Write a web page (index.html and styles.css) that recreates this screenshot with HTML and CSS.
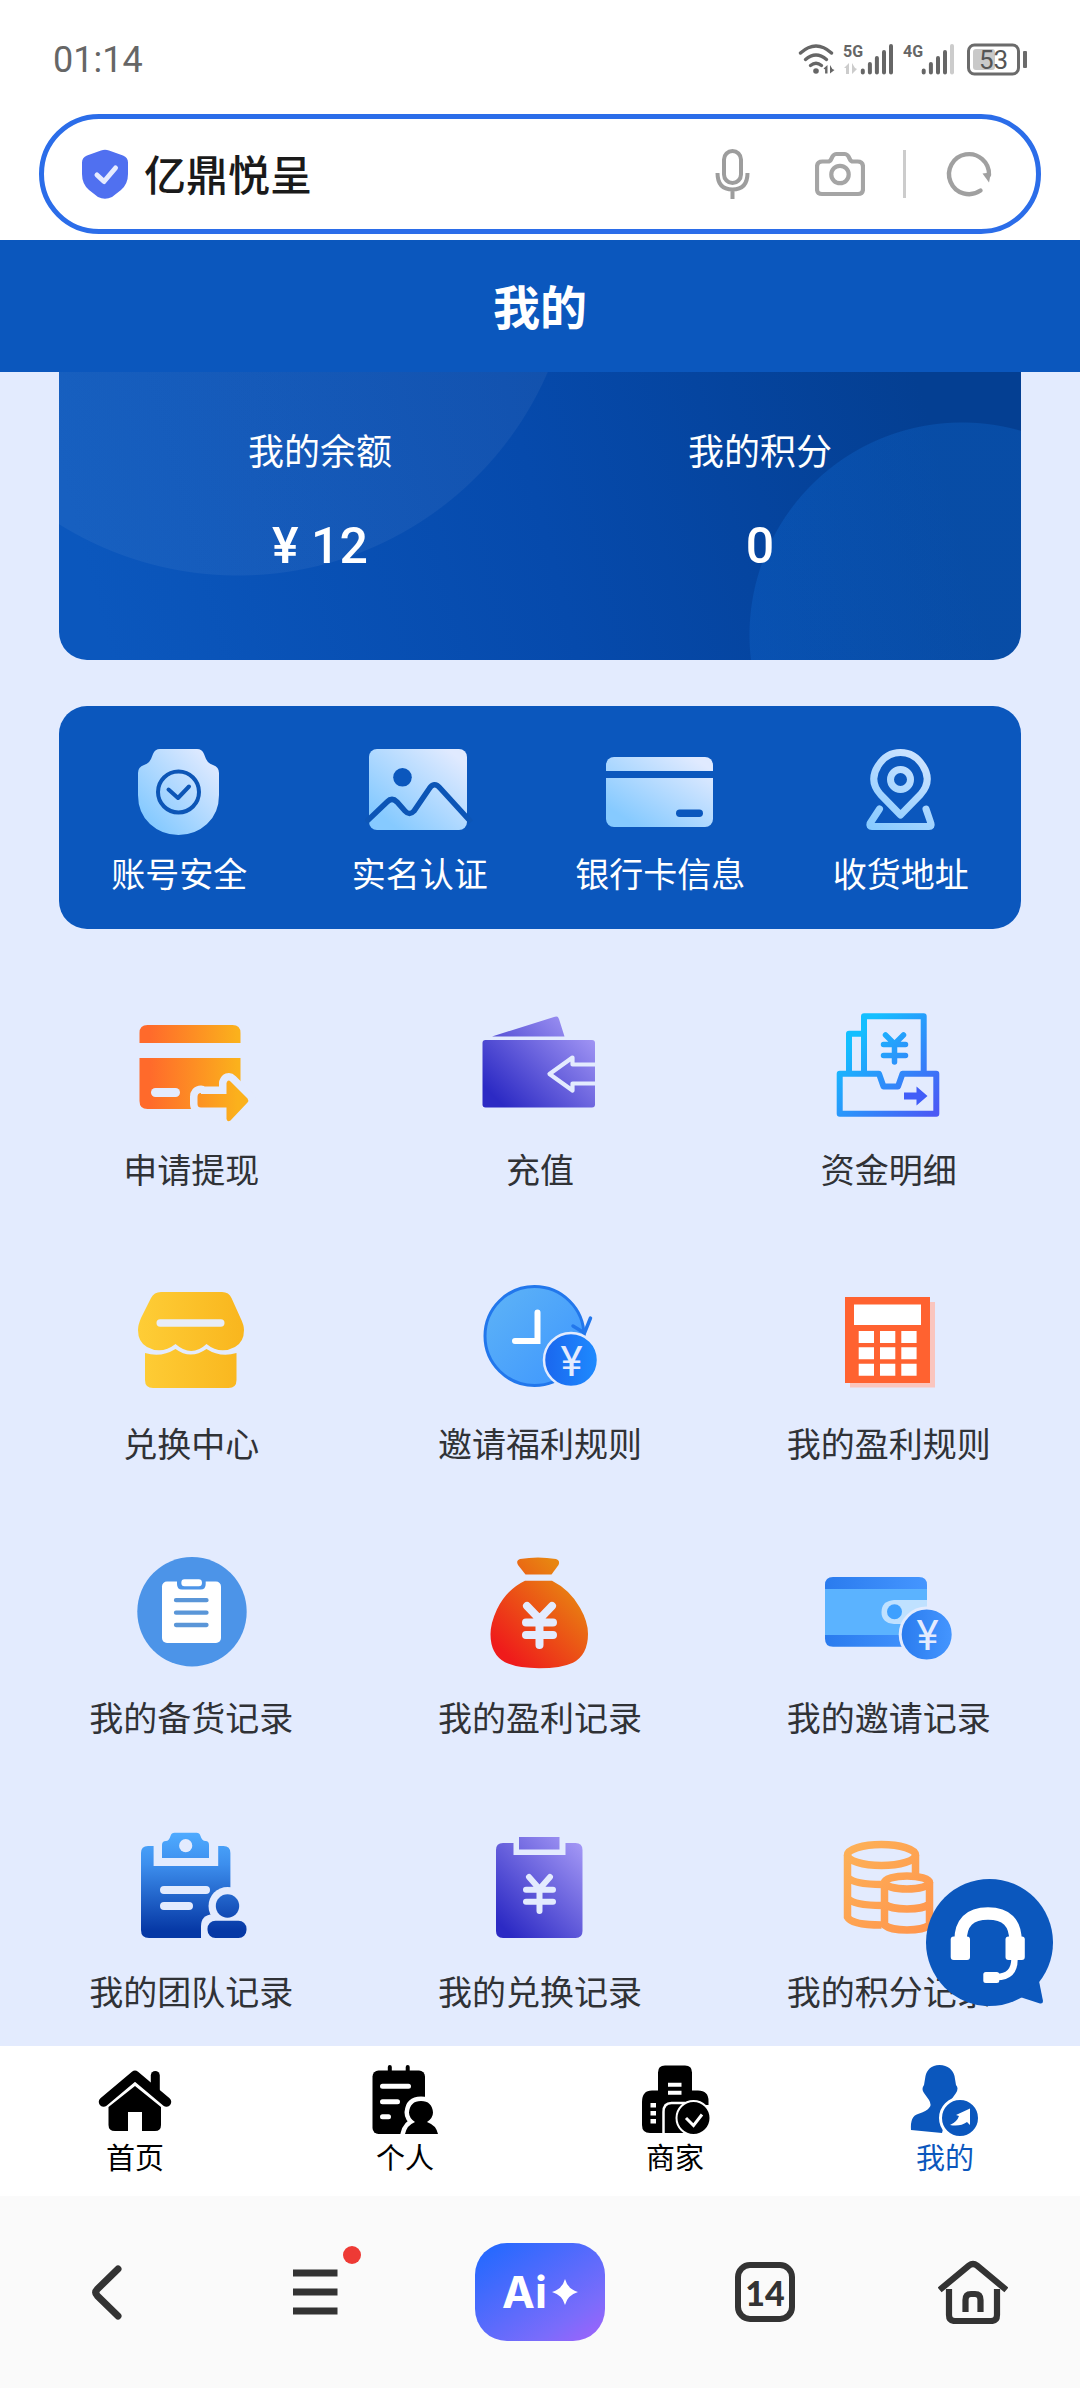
FILE: index.html
```html
<!DOCTYPE html>
<html lang="zh-CN">
<head>
    <meta charset="UTF-8">
    <meta name="viewport" content="width=device-width, initial-scale=1.0">
    <title>我的</title>
    <link rel="stylesheet" href="styles.css">
</head>
<body>

    <!-- Shared gradients -->
    <svg class="defs" width="0" height="0" aria-hidden="true">
        <defs>
            <linearGradient id="ice" x1="0" y1="1" x2="1" y2="0">
                <stop offset="0.15" stop-color="#86caff"/><stop offset="0.9" stop-color="#e0eaff"/>
            </linearGradient>
            <linearGradient id="iceLine" gradientUnits="userSpaceOnUse" x1="30" y1="85" x2="80" y2="0">
                <stop offset="0" stop-color="#86caff"/><stop offset="1" stop-color="#d4e6ff"/>
            </linearGradient>
            <linearGradient id="orange" gradientUnits="userSpaceOnUse" x1="8" y1="0" x2="112" y2="0">
                <stop offset="0.1" stop-color="#ff6a2b"/><stop offset="0.95" stop-color="#fbb11c"/>
            </linearGradient>
            <linearGradient id="purple" gradientUnits="userSpaceOnUse" x1="20" y1="105" x2="105" y2="20">
                <stop offset="0.05" stop-color="#2c2ac4"/><stop offset="1" stop-color="#a397f5"/>
            </linearGradient>
            <linearGradient id="cyan" gradientUnits="userSpaceOnUse" x1="20" y1="20" x2="108" y2="105">
                <stop offset="0.1" stop-color="#14bfff"/><stop offset="1" stop-color="#4b58f5"/>
            </linearGradient>
            <linearGradient id="yellow" gradientUnits="userSpaceOnUse" x1="8" y1="0" x2="112" y2="0">
                <stop offset="0" stop-color="#fecd36"/><stop offset="1" stop-color="#f9b61e"/>
            </linearGradient>
            <linearGradient id="sky" x1="0" y1="0" x2="1" y2="1">
                <stop offset="0" stop-color="#5fb4f6"/><stop offset="1" stop-color="#3c95ff"/>
            </linearGradient>
            <linearGradient id="coin" x1="0" y1="0" x2="1" y2="0">
                <stop offset="0" stop-color="#1a66ee"/><stop offset="1" stop-color="#1e8bff"/>
            </linearGradient>
            <linearGradient id="fire" gradientUnits="userSpaceOnUse" x1="25" y1="100" x2="95" y2="30">
                <stop offset="0" stop-color="#ef1b1b"/><stop offset="1" stop-color="#e88611"/>
            </linearGradient>
            <linearGradient id="navy" gradientUnits="userSpaceOnUse" x1="0" y1="5" x2="0" y2="108">
                <stop offset="0" stop-color="#4fabff"/><stop offset="0.3" stop-color="#3d8fee"/><stop offset="0.95" stop-color="#0638a5"/>
            </linearGradient>
            <linearGradient id="band" x1="0" y1="0" x2="1" y2="0">
                <stop offset="0" stop-color="#2a7bee"/><stop offset="1" stop-color="#4596ff"/>
            </linearGradient>
            <linearGradient id="peach" gradientUnits="userSpaceOnUse" x1="20" y1="20" x2="100" y2="100">
                <stop offset="0" stop-color="#fdb057"/><stop offset="1" stop-color="#ff954d"/>
            </linearGradient>
        </defs>
    </svg>

    <div class="status-bar">
        <span class="clock">01:14</span>
        <svg class="status-icons" width="232" height="40" viewBox="0 0 232 40" aria-label="53%">
            <g fill="none" stroke="#666" stroke-width="3.4" stroke-linecap="round">
                <path d="M3.500 13q15.500-14 31 0"/>
                <path d="M8.500 19.500q10.500-9 21 0"/>
                <path d="M13.500 25.500q5.500-4.500 11 0"/>
            </g>
            <circle cx="19" cy="31" r="2.800" fill="#666"/>
            <path d="M26.500 28.500l4-3.500v8.500h-2.400v-4zM33 25v8.500l4.500-3.500-2.100-1z" fill="#666"/>
            <text x="46" y="17" class="net">5G</text>
            <path d="M47 28l5-5v11h-3v-6zM55 23v11l5-5-2-1z" fill="#ccc"/>
            <path d="M65.800 30.500v2M72.900 24v8.500M79.900 18v14.500M87 12v20.500M94 6v26.500" class="bars"/>
            <text x="106" y="17" class="net">4G</text>
            <path d="M126.700 30.500v2M133.900 24v8.500M141 18v14.500M148 12v20.500" class="bars"/>
            <path d="M155 6v26.500" class="bars faint"/>
            <rect x="171.500" y="5" width="50" height="29" rx="6" fill="none" stroke="#6b6b6b" stroke-width="3"/>
            <rect x="176" y="9" width="22" height="21" rx="3" fill="#c9c9c9"/>
            <rect x="226" y="11" width="4" height="17" rx="1" fill="#6b6b6b"/>
            <text x="196.500" y="29" class="charge">53</text>
        </svg>
    </div>

    <form class="search-bar">
        <svg width="46" height="50" viewBox="0 0 46 50" aria-hidden="true">
            <path d="M19 1.500q4-1.500 8 0l14 5q5 2 5 7V25q0 10-7 16l-9 7q-7 3.500-14 0l-9-7Q0 35 0 25V13.500q0-5 5-7z" fill="#5070f0"/>
            <path d="M15 26l7 6.500L33.500 19" fill="none" stroke="#e6ebff" stroke-width="5" stroke-linecap="round" stroke-linejoin="round"/>
        </svg>
        <input class="search-input" type="text" value="亿鼎悦呈" aria-label="搜索">
        <button class="icon-button" type="button" aria-label="语音">
            <svg width="50" height="50" viewBox="0 0 50 50" fill="none" stroke="#9d9d9d" stroke-width="4">
                <rect x="17" y="2" width="17" height="32" rx="8.500"/>
                <path d="M10.500 24q0 16.500 15 16.500T40.500 24M25.500 40v10"/>
            </svg>
        </button>
        <button class="icon-button camera" type="button" aria-label="拍照">
            <svg width="50" height="50" viewBox="0 0 50 50" fill="none" stroke="#a5a5a5" stroke-width="4.200" stroke-linejoin="round">
                <path d="M7.500 12.500h5.500q2 0 3-2l1.500-3Q19 5 21.500 5h8q2.500 0 4 2.500l1.500 3q1 2 3 2h4.500q5.500 0 5.500 5.500v22q0 5-5 5H7q-5 0-5-5V18q0-5.500 5.500-5.500z"/>
                <circle cx="25" cy="25.500" r="8.700"/>
            </svg>
        </button>
        <span class="divider"></span>
        <button class="icon-button" type="button" aria-label="刷新">
            <svg width="50" height="50" viewBox="0 0 50 50">
                <path d="M36.500 41.500A20 20 0 1 1 45 26" fill="none" stroke="#a0a0a0" stroke-width="4.400" stroke-linecap="round"/>
                <path d="M38.500 24.500l8.500-1-2 10z" fill="#a0a0a0"/>
            </svg>
        </button>
    </form>

    <header class="page-header">
        <h1>我的</h1>
    </header>

    <main>
        <section class="balance-card">
            <div class="balance">
                <span class="balance-label">我的余额</span>
                <strong>¥ 12</strong>
            </div>
            <div class="balance">
                <span class="balance-label">我的积分</span>
                <strong>0</strong>
            </div>
        </section>

        <nav class="quick-panel">
            <a href="#">
                <svg width="110" height="90" viewBox="0 0 110 90">
                    <path d="M36 1h37q5 0 7 5l2 5q2 4.500 7 6 6 2 6 8V47q0 18-12 29-12 11-28.500 11T26 76Q14 65 14 47V25q0-6 6-8 5-1.500 7-6l2-5q2-5 7-5z" fill="url(#ice)"/>
                    <circle cx="54.500" cy="44" r="20.500" fill="none" stroke="#0c55b6" stroke-width="4"/>
                    <path d="M44.500 41.500l9.500 8.500L65 38.500" fill="none" stroke="#0c55b6" stroke-width="4" stroke-linecap="round" stroke-linejoin="round"/>
                </svg>
                <span>账号安全</span>
            </a>
            <a href="#">
                <svg width="110" height="90" viewBox="0 0 110 90">
                    <rect x="4" y="1" width="98" height="81" rx="8" fill="url(#ice)"/>
                    <circle cx="37.500" cy="29.300" r="9.300" fill="#0b57bd"/>
                    <path d="M1 74l21-20q5-5 10 0l8 9q4.500 5 9 0l15-22q5-8 11-1l31 34" fill="none" stroke="#0c55b6" stroke-width="5.500"/>
                </svg>
                <span>实名认证</span>
            </a>
            <a href="#">
                <svg width="110" height="90" viewBox="0 0 110 90">
                    <rect x="1" y="9" width="107" height="70" rx="8" fill="url(#ice)"/>
                    <path d="M0 26.500h110" stroke="#0b57bd" stroke-width="7"/>
                    <rect x="71" y="61.500" width="27" height="7.500" rx="3.700" fill="#0b57bd"/>
                </svg>
                <span>银行卡信息</span>
            </a>
            <a href="#">
                <svg width="110" height="90" viewBox="0 0 110 90" fill="none" stroke="url(#iceLine)" stroke-width="7" stroke-linecap="round" stroke-linejoin="round">
                    <path d="M54.500 67L34.500 46.500C27 38 25.500 28 32 18c11-18 34-18 45 0 6.500 10 5 20-2.500 28.500z"/>
                    <circle cx="54.500" cy="31.500" r="10"/>
                    <path d="M33.500 61L24 75.500q-1 3 2 3h57q3 0 2-3L80 61"/>
                </svg>
                <span>收货地址</span>
            </a>
        </nav>

        <nav class="menu-grid">
            <a href="#">
                <svg width="130" height="120" viewBox="-5 0 130 120">
                    <path d="M8.500 37v-10q0-8 8-8h85q8 0 8 8v10zM8.500 52h101v51h-93q-8 0-8-8z" fill="url(#orange)"/>
                    <rect x="20" y="82" width="29" height="9" rx="4.500" fill="#e3ebfe"/>
                    <path d="M70 88h25.500V77q1.500-4 4-1.500l17 17q1.500 2 0 4l-17 18q-3 2-4-1.500v-11.500H70q-3.500 0-3.500-3.500v-7q0-4 3.500-4z" fill="#e3ebfe" stroke="#e3ebfe" stroke-width="15" stroke-linejoin="round"/>
                    <path d="M70 88h25.500V77q1.500-4 4-1.500l17 17q1.500 2 0 4l-17 18q-3 2-4-1.500v-11.500H70q-3.500 0-3.500-3.500v-7q0-4 3.500-4z" fill="url(#orange)"/>
                </svg>
                <span>申请提现</span>
            </a>
            <a href="#">
                <svg width="130" height="120" viewBox="-5 0 130 120">
                    <path d="M12 30.500L74 11q4-1.500 5 2l5.500 17.500z" fill="url(#purple)"/>
                    <rect x="2.500" y="34" width="112.500" height="67.500" rx="3" fill="url(#purple)"/>
                    <path d="M116 58.500H92.500v-7L69.500 68l23 16.500v-7H116" fill="none" stroke="#e3ebfe" stroke-width="4.200" stroke-linejoin="round"/>
                </svg>
                <span>充值</span>
            </a>
            <a href="#">
                <svg width="130" height="120" viewBox="-5 0 130 120">
                    <g fill="none" stroke="url(#cyan)" stroke-width="6" stroke-linejoin="round">
                        <path d="M10.700 67.700H50L54.500 80.500H69l4.500-12.800h33.800v40H10.700z"/>
                        <path d="M35 67V10.300h59.700V67M20 67V27.700h15"/>
                        <path d="M56.500 29l9 9 9-9M54.500 38.500h22M54.500 49.500h22M65.500 38v18" stroke-linecap="round" stroke-width="5.500"/>
                    </g>
                    <path d="M75 86.500h12.500v-6L98.500 90l-11 9.500v-6H75z" fill="#415df8"/>
                </svg>
                <span>资金明细</span>
            </a>
            <a href="#">
                <svg width="130" height="120" viewBox="-5 0 130 120">
                    <path d="M30 12h61q7 0 9.500 6l9 20Q113 45 113 50q0 12-9 17-15 8-28.500-3-15 14-31 0-14 11-28.500 3Q7 62 7 50q0-5 3-12l10-20q3-6 10-6z" fill="url(#yellow)"/>
                    <path d="M14 73q16 5 30.500-4 15 11 31 0 14 9 30 4v27q0 8-8 8H22q-8 0-8-8z" fill="url(#yellow)"/>
                    <rect x="25.500" y="39.300" width="68" height="7.500" rx="3.700" fill="#e8edf8"/>
                </svg>
                <span>兑换中心</span>
            </a>
            <a href="#">
                <svg width="130" height="120" viewBox="-5 0 130 120">
                    <circle cx="54.500" cy="56" r="49.500" fill="url(#sky)" stroke="#2277ec" stroke-width="3"/>
                    <path d="M57.500 32.500V61H35" fill="none" stroke="#fff" stroke-width="6" stroke-linecap="round"/>
                    <path d="M93 46l11.500 7 6-15" fill="none" stroke="#2277ec" stroke-width="3.500" stroke-linecap="round"/>
                    <circle cx="91" cy="80" r="27" fill="url(#coin)" stroke="#e3ebfe" stroke-width="2.500"/>
                    <text x="91.500" y="96" class="yen">¥</text>
                </svg>
                <span>邀请福利规则</span>
            </a>
            <a href="#">
                <svg width="130" height="120" viewBox="-5 0 130 120">
                    <rect x="21" y="22" width="85" height="85.500" fill="#fac5be"/>
                    <rect x="16" y="17" width="85" height="86" fill="#ff6230"/>
                    <g fill="#fff">
                        <rect x="25" y="24.500" width="67" height="20.500"/>
                        <path d="M29.700 51h15.300v12H29.700zM51 51h15.300v12H51zM72.300 51h15.300v12H72.300zM29.700 67.300h15.300v12H29.700zM51 67.300h15.300v12H51zM72.300 67.300h15.300v12H72.300zM29.700 83.700h15.300v12H29.700zM51 83.700h15.300v12H51zM72.300 83.700h15.300v12H72.300z"/>
                    </g>
                </svg>
                <span>我的盈利规则</span>
            </a>
            <a href="#">
                <svg width="130" height="120" viewBox="-5 0 130 120">
                    <circle cx="61" cy="57.700" r="54.700" fill="#4c94e8"/>
                    <rect x="31" y="27.500" width="59" height="61.500" rx="5" fill="#fff"/>
                    <path d="M46 26h28.700v4q0 5.500-5 5.500H51q-5 0-5-5.500z" fill="#4c94e8"/>
                    <rect x="50.400" y="25.300" width="20.500" height="7" rx="3" fill="#fff"/>
                    <path d="M45 46.200h30.500M45 58.700h30.500M45 71h30.500" stroke="#5a96d8" stroke-width="4.300" stroke-linecap="round"/>
                </svg>
                <span>我的备货记录</span>
            </a>
            <a href="#">
                <svg width="130" height="120" viewBox="-5 0 130 120">
                    <path d="M40 5q18-3 36 0 4.500 1.500 2.500 6l-7 9.500h-26L38 11q-2.500-4.500 2-6z" fill="url(#fire)"/>
                    <path d="M45 26.700h27q18 9 28 27 8 14 8 26 0 21-15 29-12 5.500-34 5.500t-34-6q-14.500-8-14.500-28 0-11 6.500-25 10-20 28-28.500z" fill="url(#fire)"/>
                    <path d="M47 52l12.500 13L72 52M46 68.500h27M46 81h27M59.500 66v25" fill="none" stroke="#e3ebfe" stroke-width="8" stroke-linecap="round"/>
                </svg>
                <span>我的盈利记录</span>
            </a>
            <a href="#">
                <svg width="130" height="120" viewBox="-5 0 130 120">
                    <path d="M-4 36v-5q0-8 8-8h86q8 0 8 8v5zM-4 80h102v12.700H4q-8 0-8-8z" fill="url(#band)"/>
                    <rect x="-4" y="35" width="102" height="46" fill="#5bb3ff"/>
                    <path d="M98 46H65q-12.500 1-12.500 12T65 70h33z" fill="#bfe1ff"/>
                    <circle cx="65.500" cy="57.700" r="7.500" fill="#3ea0ff"/>
                    <circle cx="97.700" cy="80.500" r="26.500" fill="url(#band)" stroke="#e3ebfe" stroke-width="3"/>
                    <text x="98.500" y="96" class="yen">¥</text>
                </svg>
                <span>我的邀请记录</span>
            </a>
            <a href="#">
                <svg width="130" height="120" viewBox="-5 0 130 120">
                    <path d="M10 25q0-7 7-7h5.600v20h64.600V18h5.200q7 0 7 7v85H18q-8 0-8-8z" fill="url(#navy)"/>
                    <path d="M31 17q0-4 4-4 3 0 4.500-5 1-3.300 4-3.300h22q3 0 4 3.300 1.500 5 5 5t3.500 4v13H31z" fill="url(#navy)"/>
                    <circle cx="54.700" cy="17.700" r="6.600" fill="#e3ebfe"/>
                    <path d="M33 62h42M33 78h25" stroke="#e3ebfe" stroke-width="8" stroke-linecap="round"/>
                    <g fill="#e3ebfe"><circle cx="96.500" cy="78" r="19"/><path d="M70 112V98q0-11 12-12h30q10 2 11 12v14z"/></g>
                    <circle cx="96.500" cy="78" r="11.700" fill="url(#navy)"/>
                    <rect x="76.500" y="92.700" width="39" height="17.300" rx="8" fill="url(#navy)"/>
                </svg>
                <span>我的团队记录</span>
            </a>
            <a href="#">
                <svg width="130" height="120" viewBox="-5 0 130 120">
                    <path d="M23 15h10.500v12h52V15h10q7 0 7 7v81q0 7-7 7H23q-7 0-7-7V22q0-7 7-7z" fill="url(#purple)"/>
                    <rect x="39" y="9" width="40.500" height="12.500" fill="url(#purple)"/>
                    <path d="M49 49l10.500 12L70 49M46 61.700h27M46 73.700h27M59.500 62v21" fill="none" stroke="#e3ebfe" stroke-width="6" stroke-linecap="round"/>
                </svg>
                <span>我的兑换记录</span>
            </a>
            <a href="#">
                <svg width="130" height="120" viewBox="-5 0 130 120" fill="none" stroke="url(#peach)" stroke-width="7.500">
                    <ellipse cx="52.500" cy="27" rx="34" ry="10.500"/>
                    <path d="M18.500 27v62q4 8 34 8M86.500 27v19M18.500 49q6 7.500 35 7.500M18.500 70q6 7.500 35 7.500"/>
                    <ellipse cx="78" cy="54.500" rx="22.500" ry="6.500"/>
                    <path d="M55.500 54v43q6 5 22.500 5t22.500-5V54M55.500 76q6 5 22.500 5t22.500-5"/>
                </svg>
                <span>我的积分记录</span>
            </a>
        </nav>

        <button class="service-button" type="button" aria-label="客服">
            <svg width="127" height="127" viewBox="0 0 127 127">
                <circle cx="63.500" cy="63.500" r="63.500" fill="#0b57bd"/>
                <path d="M113 102l4 20q0 3-3 2.500l-20-6.500z" fill="#0b57bd"/>
                <path d="M34.500 62q0-27.500 27.500-27.500T89.500 62" fill="none" stroke="#fff" stroke-width="12.500"/>
                <rect x="24.700" y="57.500" width="19.300" height="23.500" rx="3" fill="#fff"/>
                <rect x="79.500" y="57.500" width="19.300" height="23.500" rx="3" fill="#fff"/>
                <path d="M88.500 80q0 18-18 18" fill="none" stroke="#fff" stroke-width="6.500"/>
                <rect x="57.300" y="93" width="16" height="11" rx="2.500" fill="#fff"/>
            </svg>
        </button>
    </main>

    <nav class="tab-bar">
        <a href="#">
            <svg width="80" height="80" viewBox="0 0 80 80">
                <path d="M8.500 42L40 15.500 71.500 42" fill="none" stroke="#000" stroke-width="9.500" stroke-linecap="round" stroke-linejoin="round"/>
                <path d="M60.300 15.500V32" stroke="#000" stroke-width="9" stroke-linecap="round"/>
                <path d="M40 26l26 21v18q0 6-6 6H47V52H33v19H20q-6.500 0-6.500-6V47z"/>
            </svg>
            <span>首页</span>
        </a>
        <a href="#">
            <svg width="80" height="80" viewBox="0 0 80 80">
                <rect x="7.500" y="10.500" width="52.500" height="63.500" rx="6"/>
                <path d="M24.800 12V7M42.700 12V7" stroke="#000" stroke-width="4" stroke-linecap="round"/>
                <path d="M17.500 26.300h26M17.500 41.700h15M17.500 56.700h6" stroke="#fff" stroke-width="5" stroke-linecap="round"/>
                <path d="M50 62Q44 58 44 52.500 45 41 56 41t12 11.500q0 5.500-6 9.500 9 3 11 12H40q2-9 10-12z" fill="#fff" stroke="#fff" stroke-width="9"/>
                <path d="M50 62Q44 58 44 52.500 45 41 56 41t12 11.500q0 5.500-6 9.500 9 3 11 12H40q2-9 10-12z"/>
            </svg>
            <span>个人</span>
        </a>
        <a href="#">
            <svg width="80" height="80" viewBox="0 0 80 80">
                <path d="M30 5.500h20q7 0 7 7v18h6q10.500 0 10.500 10.500v4H60v28H15q-8 0-8-8V42q0-11.500 10-11.500h6v-18q0-7 7-7z"/>
                <path d="M33 24.700h13.500M33 32.800h13.500" stroke="#fff" stroke-width="4"/>
                <path d="M15.500 45.300h5.500M15.500 53.300h5.500M15.500 61.300h5.500" stroke="#fff" stroke-width="4.500"/>
                <path d="M28.500 74V52q0-9 8-9h14" fill="none" stroke="#fff" stroke-width="2.500"/>
                <circle cx="58.500" cy="58" r="17" stroke="#fff" stroke-width="2"/>
                <path d="M51 58l7.500 7.500L67 54.500" fill="none" stroke="#fff" stroke-width="3"/>
            </svg>
            <span>商家</span>
        </a>
        <a href="#" class="active">
            <svg width="80" height="80" viewBox="0 0 80 80" fill="#0b57bd">
                <path d="M34.500 5C43 5 48 10 49.500 16L51 25q3 3 0 8l-5 7q-4 4-3 10l-6 23-31-3q-1-14 7-16 9-3 11-6 3-3 0-8l-5-7q-3-4 0-8l1.500-9C22 10 26 5 34.500 5z"/>
                <circle cx="55" cy="58" r="19.500" stroke="#fff" stroke-width="3"/>
                <path d="M45 65q7-3 9-9l-3-1 14-6.500V65l-3-3q-7 5-17 3z" fill="#fff"/>
            </svg>
            <span>我的</span>
        </a>
    </nav>

    <footer class="browser-bar">
        <button type="button" aria-label="返回">
            <svg width="60" height="60" viewBox="0 0 60 60">
                <path d="M41 7L20.500 27q-3.500 3.500 0 7L41 54" fill="none" stroke="#333" stroke-width="7" stroke-linecap="round"/>
            </svg>
        </button>
        <button class="menu-button" type="button" aria-label="菜单">
            <svg width="60" height="60" viewBox="0 0 60 60">
                <path d="M8 11h44.500M8 30h44.500M8 49h44.500" stroke="#333" stroke-width="7"/>
            </svg>
            <span class="dot"></span>
        </button>
        <button class="ai-button" type="button">
            <span>Ai</span>
            <svg width="26" height="26" viewBox="0 0 26 26"><path d="M13 0q2.500 10 13 13-10.500 3-13 13-2.500-10-13-13Q10.500 10 13 0z" fill="#fff"/></svg>
        </button>
        <button type="button" aria-label="标签页">
            <span class="tab-count">14</span>
        </button>
        <button type="button" aria-label="主页">
            <svg width="70" height="64" viewBox="0 0 70 64" fill="none" stroke="#333" stroke-width="6.200">
                <path d="M4 28L31 5.500q4-3 8 0L66 28" stroke-linecap="square"/>
                <path d="M11 29v26q0 6 6 6h36q6 0 6-6V29"/>
                <path d="M27.500 52V40q0-6 5.500-6h4q5.500 0 5.500 6v12"/>
            </svg>
        </button>
    </footer>

</body>
</html>
```
FILE: styles.css
```css
* {
    box-sizing: border-box;
}

body {
    margin: 0;
    min-height: 100vh;
    display: flex;
    flex-direction: column;
    background-color: #fff;
    font-family: Roboto, "Noto Sans CJK SC", sans-serif;
    color: #303236;
}

a {
    color: inherit;
    text-decoration: none;
}

button {
    padding: 0;
    border: none;
    background: none;
    font-family: inherit;
    cursor: pointer;
}

svg {
    display: block;
    flex: none;
}

.defs {
    position: absolute;
}

/* Status bar */
.status-bar {
    height: 114px;
    padding: 5px 51px 0 53px;
    display: flex;
    align-items: center;
    justify-content: space-between;
}

.clock {
    font-size: 36px;
    color: #666;
}

.net {
    font-size: 16px;
    font-weight: bold;
    fill: #666;
}

.charge {
    font-size: 26px;
    fill: #555;
    text-anchor: middle;
}

.bars {
    stroke: #666;
    stroke-width: 4;
    stroke-linecap: round;
}

.faint {
    stroke: #ccc;
}

/* Search bar */
.search-bar {
    height: 120px;
    margin: 0 39px 6px;
    padding: 0 42px 0 38px;
    border: 5px solid #2b6de9;
    border-radius: 60px;
    display: flex;
    align-items: center;
    gap: 38px;
}

.search-input {
    flex: 1;
    min-width: 0;
    margin-left: -22px;
    padding: 0 0 4px;
    border: none;
    outline: none;
    background: none;
    font-family: inherit;
    font-size: 42px;
    font-weight: 500;
    color: #1a1a1a;
}

.camera {
    margin-left: 20px;
}

.divider {
    width: 3px;
    height: 48px;
    background-color: #ccc;
}

/* Page header */
.page-header {
    height: 132px;
    padding-top: 6px;
    display: flex;
    align-items: center;
    justify-content: center;
    background-color: #0b57bd;
    color: #fff;
}

h1 {
    margin: 0;
    font-size: 47px;
    line-height: 64px;
}

main {
    position: relative;
    flex: 1;
    background-color: #e3ebfe;
}

/* Balance card */
.balance-card {
    height: 288px;
    margin: 0 59px 46px;
    padding: 53px 41px 0;
    border-radius: 0 0 28px 28px;
    display: grid;
    grid-template-columns: 1fr 1fr;
    background:
        radial-gradient(circle at 179px -134px, rgba(255, 255, 255, 0.05) 337px, transparent 338px),
        radial-gradient(circle at calc(100% - 59px) 263px, rgba(20, 120, 230, 0.24) 212px, transparent 213px),
        linear-gradient(75deg, #0b57bd 5%, #064aac 50%, #043f92 90%);
    color: #fff;
}

.balance {
    display: flex;
    flex-direction: column;
    align-items: center;
    gap: 33px;
}

.balance-label {
    font-size: 36px;
    line-height: 56px;
}

.balance strong {
    font-size: 50px;
    line-height: 64px;
    font-weight: 500;
}

/* Quick links */
.quick-panel {
    margin: 0 59px;
    padding: 42px 0 30px;
    border-radius: 28px;
    display: grid;
    grid-template-columns: repeat(4, 1fr);
    background-color: #0b57bd;
    color: #fff;
}

.quick-panel a {
    display: flex;
    flex-direction: column;
    align-items: center;
    gap: 13px;
    font-size: 34px;
    line-height: 48px;
}

/* Feature menu */
.menu-grid {
    padding: 77px 17px 29px;
    display: grid;
    grid-template-columns: repeat(3, 1fr);
    row-gap: 85px;
}

.menu-grid a {
    display: flex;
    flex-direction: column;
    align-items: center;
    gap: 21px;
    font-size: 34px;
    line-height: 48px;
}

.yen {
    font-size: 42px;
    fill: #e3ebfe;
    text-anchor: middle;
}

/* Customer service bubble, floats over the menu */
.service-button {
    position: absolute;
    right: 27px;
    bottom: 40px;
}

/* Tab bar */
.tab-bar {
    padding: 14px 0 19px;
    display: grid;
    grid-template-columns: repeat(4, 1fr);
    background-color: #fff;
    color: #000;
}

.tab-bar a {
    display: flex;
    flex-direction: column;
    align-items: center;
    gap: 1px;
    font-size: 29px;
    line-height: 36px;
}

.tab-bar .active {
    color: #0b57bd;
}

/* Browser bar */
.browser-bar {
    height: 192px;
    display: grid;
    grid-template-columns: 214fr 202fr 248fr 202fr 214fr;
    align-items: center;
    justify-items: center;
    background-color: #fafafa;
}

.menu-button {
    position: relative;
}

.dot {
    position: absolute;
    top: -16px;
    right: -16px;
    width: 18px;
    height: 18px;
    border-radius: 50%;
    background-color: #ee3a35;
}

.ai-button {
    width: 130px;
    height: 98px;
    border-radius: 32px;
    display: flex;
    align-items: center;
    justify-content: center;
    gap: 5px;
    background: linear-gradient(145deg, #2969fe 10%, #7a6cfb 75%, #9a64fb 95%);
    color: #fff;
    font-family: Inter, sans-serif;
    font-size: 44px;
    font-weight: bold;
}

.tab-count {
    width: 60px;
    height: 60px;
    border: 6px solid #333;
    border-radius: 15px;
    display: flex;
    align-items: center;
    justify-content: center;
    font-family: Lato, sans-serif;
    font-size: 34px;
    font-weight: 900;
    color: #333;
}
```
